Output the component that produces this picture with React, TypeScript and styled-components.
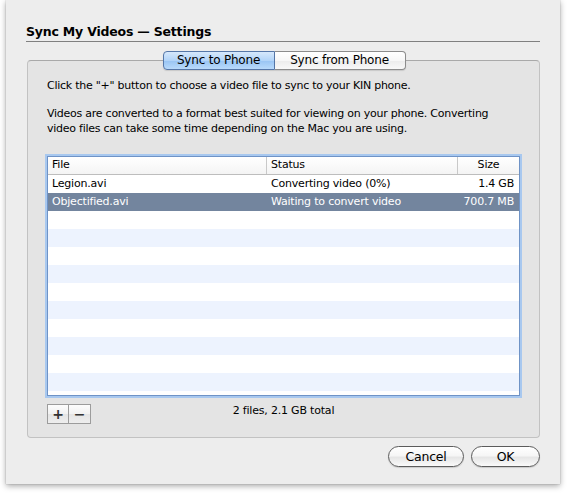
import styled, { createGlobalStyle } from 'styled-components';

const GlobalStyle = createGlobalStyle`
    html, body {
        margin: 0;
        padding: 0;
        background: #ffffff;
    }
    body {
        font-family: 'Lucida Grande', 'DejaVu Sans', sans-serif;
        color: #000;
    }
`;

type FileRow = { name: string; status: string; size: string };

const FILES: FileRow[] = [
    { name: 'Legion.avi', status: 'Converting video (0%)', size: '1.4 GB' },
    { name: 'Objectified.avi', status: 'Waiting to convert video', size: '700.7 MB' },
];

const EMPTY_ROWS = 11;

const App = () => {
    return (
        <>
            <GlobalStyle />
            <Page>
                <Window>
                    <Title>Sync My Videos — Settings</Title>
                    <TabBar>
                        <Tab active>Sync to Phone</Tab>
                        <Tab>Sync from Phone</Tab>
                    </TabBar>
                    <TabBox>
                        <Note>Click the "+" button to choose a video file to sync to your KIN phone.</Note>
                        <Note>
                            Videos are converted to a format best suited for viewing on your phone. Converting
                            <br />
                            video files can take some time depending on the Mac you are using.
                        </Note>
                        <Table>
                            <HeaderRow>
                                <HeadCell>File</HeadCell>
                                <HeadCell>Status</HeadCell>
                                <HeadCell align="center">Size</HeadCell>
                            </HeaderRow>
                            {FILES.map((f, i) => (
                                <Row key={f.name} striped={i % 2 === 1} selected={i === 1}>
                                    <Cell>{f.name}</Cell>
                                    <Cell>{f.status}</Cell>
                                    <Cell align="right">{f.size}</Cell>
                                </Row>
                            ))}
                            {Array.from({ length: EMPTY_ROWS }).map((_, i) => (
                                <Row key={i} striped={(i + FILES.length) % 2 === 1} />
                            ))}
                        </Table>
                        <Footer>
                            <Segments>
                                <SmallButton>+</SmallButton>
                                <SmallButton>−</SmallButton>
                            </Segments>
                            <Summary>2 files, 2.1 GB total</Summary>
                        </Footer>
                    </TabBox>
                    <Actions>
                        <PillButton>Cancel</PillButton>
                        <PillButton wide>OK</PillButton>
                    </Actions>
                </Window>
            </Page>
        </>
    );
};

export default App;

const Page = styled.div`
    width: 567px;
    height: 496px;
    padding-left: 6px;
    box-sizing: border-box;
`;

const Window = styled.div`
    width: 554px;
    height: 484px;
    box-sizing: border-box;
    background: #ededed;
    padding: 24px 20px 0 20px;
    display: flex;
    flex-direction: column;
    box-shadow: 0 2px 6px rgba(0, 0, 0, 0.35), 0 0 1px rgba(0, 0, 0, 0.3);
`;

const Title = styled.div`
    font-size: 12.5px;
    font-weight: bold;
    letter-spacing: -0.2px;
    line-height: 16px;
    padding-bottom: 1px;
    border-bottom: 1px solid #808080;
`;

const TabBar = styled.div`
    display: flex;
    justify-content: center;
    margin-top: 9px;
    margin-left: 2px;
    position: relative;
    z-index: 1;
`;

const Tab = styled.div<{ active?: boolean }>`
    height: 19px;
    box-sizing: border-box;
    padding: 0 11px;
    font-size: 12px;
    letter-spacing: -0.2px;
    line-height: 17px;
    border: 1px solid ${(p) => (p.active ? '#5677a8' : '#8c8c8c')};
    background: ${(p) =>
        p.active
            ? 'linear-gradient(#d6e8fc 0%, #b2d4f8 50%, #98c4f3 51%, #b9dafb 100%)'
            : 'linear-gradient(#ffffff 0%, #f7f7f7 50%, #ececec 51%, #f8f8f8 100%)'};
    box-shadow: 0 1px 1px rgba(0, 0, 0, 0.12);
    &:first-child {
        border-radius: 4px 0 0 4px;
        width: 112px;
        text-align: center;
        padding: 0;
    }
    &:last-child {
        border-radius: 0 4px 4px 0;
        border-left: none;
        width: 131px;
        text-align: center;
        padding: 0;
    }
`;

const TabBox = styled.div`
    margin: -10px 0 0 1px;
    height: 378px;
    box-sizing: border-box;
    border: 1px solid #c2c2c2;
    border-top-color: #a9a9a9;
    border-radius: 4px;
    background: #e4e4e4;
    padding: 17px 19px 0 19px;
    display: flex;
    flex-direction: column;
`;

const Note = styled.p`
    margin: 0 0 13px 0;
    font-size: 11px;
    line-height: 15px;
    letter-spacing: -0.25px;
`;

const Table = styled.div`
    margin-top: 7px;
    height: 240px;
    box-sizing: border-box;
    border: 1px solid #6f93c6;
    box-shadow: 0 0 0 2px #a8c8ef;
    background: #ffffff;
    overflow: hidden;
    display: flex;
    flex-direction: column;
`;

const columns = '219px 191px 1fr';

const HeaderRow = styled.div`
    display: grid;
    grid-template-columns: ${columns};
    height: 17px;
    flex-shrink: 0;
    background: linear-gradient(#ffffff, #f4f4f4);
    border-bottom: 1px solid #bdbdbd;
`;

const HeadCell = styled.div<{ align?: string }>`
    font-size: 11px;
    letter-spacing: -0.2px;
    line-height: 16px;
    padding: 0 4px;
    text-align: ${(p) => p.align || 'left'};
    border-right: 1px solid #c9c9c9;
    &:last-child {
        border-right: none;
    }
`;

const Row = styled.div<{ striped?: boolean; selected?: boolean }>`
    display: grid;
    grid-template-columns: ${columns};
    height: 18px;
    flex-shrink: 0;
    background: ${(p) => (p.selected ? '#73859e' : p.striped ? '#edf3fe' : '#ffffff')};
    color: ${(p) => (p.selected ? '#ffffff' : '#000000')};
`;

const Cell = styled.div<{ align?: string }>`
    font-size: 11px;
    letter-spacing: -0.2px;
    line-height: 18px;
    padding: 0 5px 0 4px;
    text-align: ${(p) => p.align || 'left'};
    white-space: nowrap;
`;

const Footer = styled.div`
    display: grid;
    grid-template-columns: 1fr auto 1fr;
    align-items: center;
    margin-top: 8px;
`;

const Segments = styled.div`
    display: flex;
`;

const SmallButton = styled.div`
    width: 22px;
    height: 20px;
    box-sizing: border-box;
    border: 1px solid #9c9c9c;
    background: linear-gradient(#fdfdfd 0%, #f1f1f1 50%, #e4e4e4 51%, #eeeeee 100%);
    font-size: 14px;
    font-weight: bold;
    line-height: 18px;
    text-align: center;
    color: #333;
    & + & {
        border-left: none;
    }
`;

const Summary = styled.div`
    font-size: 11px;
    letter-spacing: -0.2px;
    margin-top: -7px;
`;

const Actions = styled.div`
    display: flex;
    justify-content: flex-end;
    gap: 7px;
    margin-top: 8px;
`;

const PillButton = styled.div<{ wide?: boolean }>`
    width: ${(p) => (p.wide ? '69px' : '76px')};
    height: 21px;
    box-sizing: border-box;
    border: 1px solid #5c5c5c;
    border-radius: 11px;
    background: linear-gradient(#ffffff 0%, #f6f6f6 45%, #e6e6e6 55%, #fafafa 100%);
    box-shadow: 0 1px 1px rgba(0, 0, 0, 0.15);
    font-size: 12.5px;
    letter-spacing: -0.2px;
    line-height: 19px;
    text-align: center;
`;
